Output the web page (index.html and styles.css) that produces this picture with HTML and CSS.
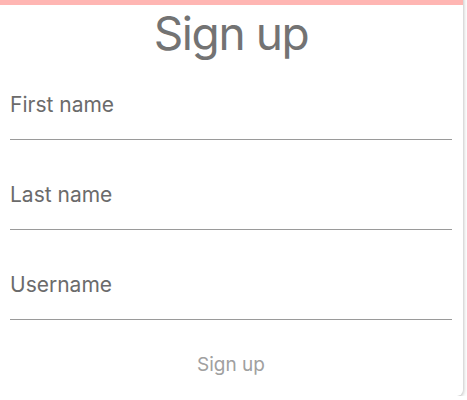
FILE: index.html
```html
<!DOCTYPE html>
<html>
<head>
<meta charset="utf-8">
<link rel="stylesheet" href="styles.css">
</head>
<body>
<form class="card">
  <h1 class="title">Sign up</h1>
  <input class="field field-first" type="text" placeholder="First name">
  <input class="field" type="text" placeholder="Last name">
  <input class="field" type="text" placeholder="Username">
  <button class="submit" type="button">Sign up</button>
</form>
</body>
</html>
```
FILE: styles.css
```css
html, body {
  margin: 0;
  padding: 0;
  background: #ffffff;
  overflow: hidden;
}
.card {
  box-sizing: border-box;
  width: 471px;
  height: 404px;
  margin: -8px 0 0 -8px;
  padding: 0 11px 0 18px;
  border-top: 13px solid #ffb6b3;
  border-radius: 6px;
  background: #ffffff;
  box-shadow: 0 1px 4px rgba(0, 0, 0, 0.35);
  display: flex;
  flex-direction: column;
  font-family: Inter, "Liberation Sans", Arial, sans-serif;
}
.title {
  margin: 0;
  font-size: 46px;
  line-height: 56px;
  letter-spacing: -1.4px;
  font-weight: normal;
  color: #737373;
  text-align: center;
}
.field {
  display: block;
  width: 100%;
  box-sizing: border-box;
  margin: 0;
  padding: 43px 0 22px 0;
  border: none;
  border-bottom: 1px solid #9a9a9a;
  outline: none;
  background: transparent;
  font-family: inherit;
  font-size: 21px;
  line-height: 24px;
  color: #666666;
}
.field-first {
  padding-top: 32px;
}
.field::placeholder {
  color: #6b6b6b;
  opacity: 1;
}
.submit {
  margin: 33px auto 0;
  padding: 0;
  border: none;
  background: transparent;
  font-family: inherit;
  font-size: 19px;
  line-height: 24px;
  color: #a0a0a0;
}
```
